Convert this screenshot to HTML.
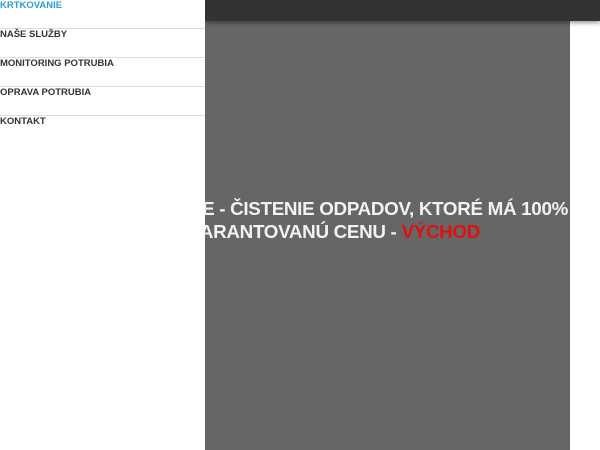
<!DOCTYPE html>
<html><head><meta charset="utf-8"><style>
html,body{margin:0;padding:0;width:600px;height:450px;overflow:hidden;background:#fff;font-family:"Liberation Sans",sans-serif;}
.top{position:absolute;left:205px;top:0;width:395px;height:21px;background:#333;box-shadow:0 2px 4px rgba(0,0,0,.4);z-index:2}
.panel{position:absolute;left:205px;top:0;width:365px;height:450px;background:#666;}
.t{position:absolute;white-space:nowrap;color:#f2f2f2;font-weight:bold;font-size:18.8px;letter-spacing:-0.3px}
.t b{color:#e01010}
.side{position:absolute;left:0;top:0;width:205px;height:450px;background:#fff;z-index:3}
.side div{height:28px;border-bottom:1px solid #ddd;font-size:9.5px;font-weight:bold;color:#333;line-height:11px}
.side div:first-child{color:#2a9fd6}
.side div:last-child{border-bottom:none}
</style></head><body>
<div class="panel"></div>
<div class="top"></div>
<div class="t" style="right:32px;top:198px">KRTKOVANIE - ČISTENIE ODPADOV, KTORÉ MÁ 100%</div>
<div class="t" style="right:120px;top:221px">GARANTOVANÚ CENU - <b>VÝCHOD</b></div>
<div class="side">
<div>KRTKOVANIE</div>
<div>NAŠE SLUŽBY</div>
<div>MONITORING POTRUBIA</div>
<div>OPRAVA POTRUBIA</div>
<div>KONTAKT</div>
</div>
</body></html>
